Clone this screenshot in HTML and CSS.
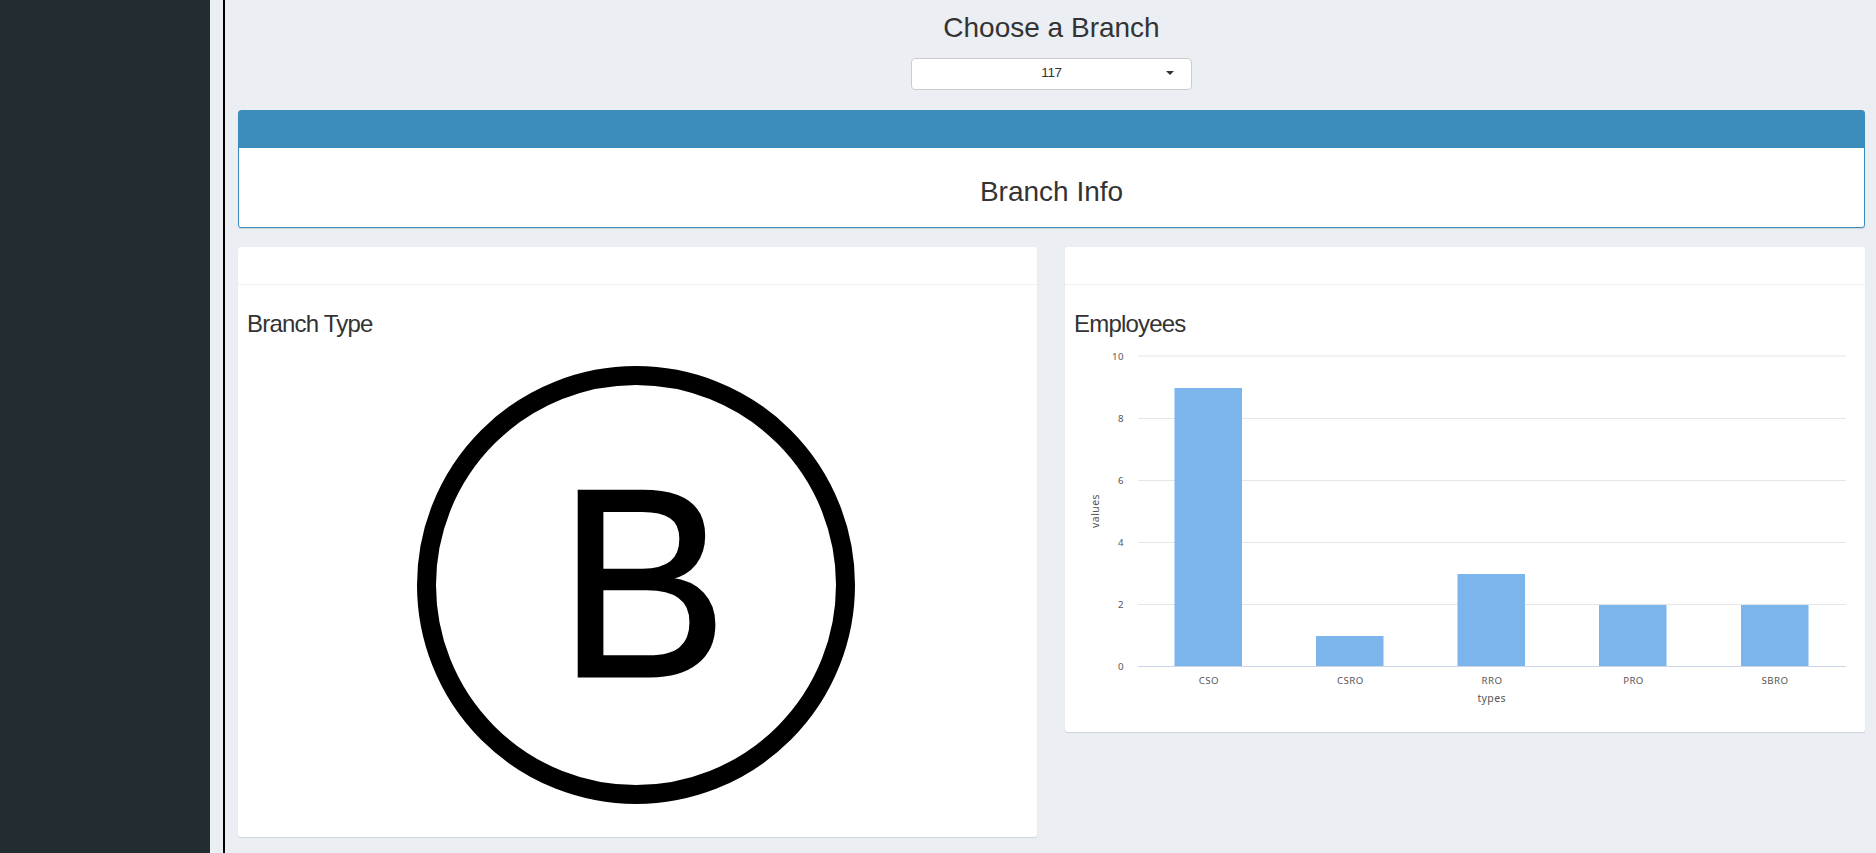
FILE: index.html
```html
<!DOCTYPE html>
<html lang="en">
<head>
<meta charset="utf-8">
<title>Branch Info</title>
<link rel="stylesheet" href="styles.css">
</head>
<body>
<div class="app">
  <aside class="sidebar"></aside>
  <main class="content">
    <section class="chooser">
      <h2 class="title">Choose a Branch</h2>
      <div class="select"><span class="select-value">117</span><i class="caret"></i></div>
    </section>
    <section class="box box-primary">
      <header class="box-header"></header>
      <h2 class="title">Branch Info</h2>
    </section>
    <div class="row">
      <section class="box">
        <header class="box-header"></header>
        <div class="box-body branch-body">
          <h3 class="subtitle">Branch Type</h3>
          <svg class="badge" width="440" height="440" viewBox="0 0 440 440">
            <circle cx="220" cy="220" r="209.5" fill="none" stroke="#000" stroke-width="19"/>
            <text class="letter" transform="translate(162.500 311.500) scale(.945 1)" x="-22" y="0">B</text>
          </svg>
        </div>
      </section>
      <section class="box">
        <header class="box-header"></header>
        <div class="box-body chart-body">
          <h3 class="subtitle">Employees</h3>
          <svg class="chart" width="780" height="380" viewBox="1075 345 780 380">
            <g class="grid">
              <path d="M1138 356h708M1138 418.500h708M1138 480.500h708M1138 542.500h708M1138 604.500h708"/>
            </g>
            <g class="bars">
              <rect x="1174.500" y="388" width="67.500" height="278"/>
              <rect x="1316" y="636" width="67.500" height="30"/>
              <rect x="1457.500" y="574" width="67.500" height="92"/>
              <rect x="1599" y="605" width="67.500" height="61"/>
              <rect x="1741" y="605" width="67.500" height="61"/>
            </g>
            <path class="axis" d="M1138 666.500h708"/>
            <g class="label end">
              <text x="1124" y="360">10</text>
              <text x="1124" y="422">8</text>
              <text x="1124" y="484">6</text>
              <text x="1124" y="546">4</text>
              <text x="1124" y="608">2</text>
              <text x="1124" y="670">0</text>
            </g>
            <g class="label mid">
              <text x="1208.800" y="684">CSO</text>
              <text x="1350.300" y="684">CSRO</text>
              <text x="1492" y="684">RRO</text>
              <text x="1633.500" y="684">PRO</text>
              <text x="1775" y="684">SBRO</text>
            </g>
            <g class="axis-title mid">
              <text x="1491.700" y="702">types</text>
              <text transform="translate(1099 511) rotate(-90)">values</text>
            </g>
          </svg>
        </div>
      </section>
    </div>
  </main>
</div>
</body>
</html>
```
FILE: styles.css
```css
* { box-sizing: border-box; }
body {
  margin: 0;
  background: #ebeff4;
  color: #333;
  font-family: "Liberation Sans", Arial, sans-serif;
  overflow: hidden;
}
.app { display: flex; height: 853px; }
.sidebar { width: 210px; background: #222d32; }
.content {
  flex: 1;
  margin-left: 13px;
  border-left: 2px solid #000;
  padding: 11px 11px 0 13px;
}
h2, h3 { margin: 0; font-weight: 400; }
.title { font-size: 28px; line-height: 34px; text-align: center; }
.chooser {
  height: 99px;
  display: flex;
  flex-direction: column;
  align-items: center;
  gap: 13px;
}
.select {
  width: 281px;
  height: 32px;
  padding-bottom: 3px;
  border: 1px solid #ccc;
  border-radius: 4px;
  background: #fff;
  display: grid;
  grid-template-columns: 25px 1fr 25px;
  align-items: center;
}
.select-value {
  grid-column: 2;
  text-align: center;
  font-size: 13.500px;
  letter-spacing: -.4px;
  line-height: 20px;
}
.caret {
  width: 0;
  height: 0;
  border: 4.500px solid transparent;
  border-top-color: #333;
  border-bottom: 0;
}
.box {
  background: #fff;
  border-radius: 3px;
  box-shadow: 0 1px 1px rgba(0, 0, 0, .12);
}
.box-header { height: 38px; border-bottom: 1px solid #f0f0f2; }
.box-primary { height: 118px; border: 1px solid #3c8dbc; margin-bottom: 19px; }
.box-primary .box-header { height: 37px; background: #3c8dbc; border-color: #3c8dbc; }
.box-primary .title { padding-top: 27px; }
.row { display: grid; grid-template-columns: 799px 800px; gap: 28px; align-items: start; }
.box-body { padding: 25px 9px 0; }
.branch-body { height: 552px; }
.chart-body { height: 447px; }
.subtitle { font-size: 24px; letter-spacing: -.8px; line-height: 28px; }
.badge { display: block; margin: 27px auto 0 169px; }
.letter { font-size: 270px; fill: #000; stroke: #000; stroke-width: 2px; }
.chart { display: block; margin: 7px 0 0 1px; }
.grid { stroke: #e6e6e6; fill: none; }
.axis { stroke: #ccd6eb; }
.bars { fill: #7cb5ec; }
.label { font: 9.700px "Noto Sans", sans-serif; letter-spacing: .4px; fill: #555; }
.axis-title { font: 10.500px "Noto Sans", sans-serif; letter-spacing: .4px; fill: #555; }
.end { text-anchor: end; }
.mid { text-anchor: middle; }
```
